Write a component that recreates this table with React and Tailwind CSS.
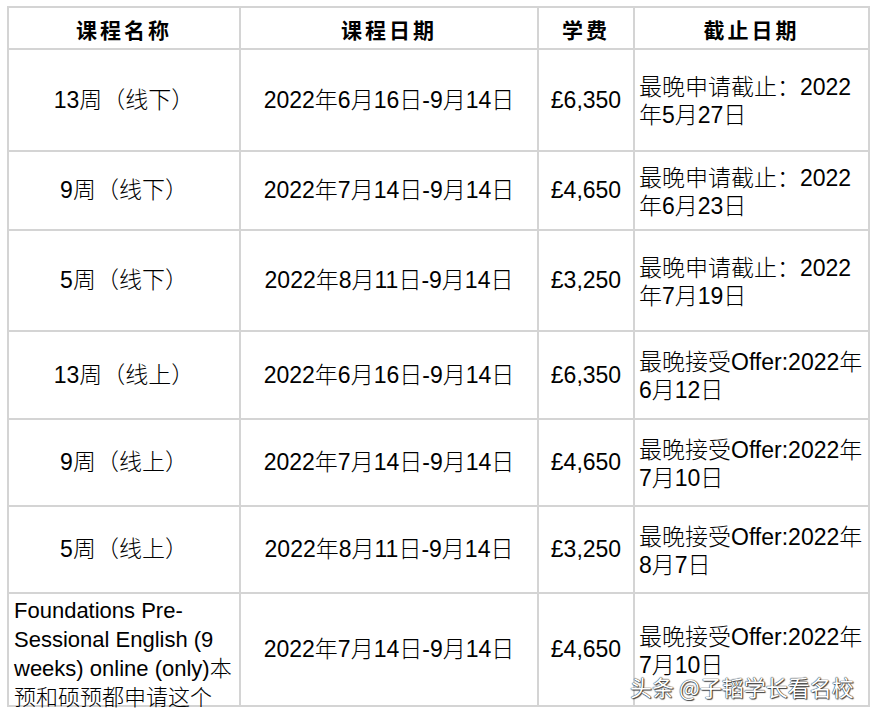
import React from "react";

const rows = [
  { name: "13周（线下）", date: "2022年6月16日-9月14日", fee: "£6,350", due: ["最晚申请截止：2022", "年5月27日"] },
  { name: "9周（线下）", date: "2022年7月14日-9月14日", fee: "£4,650", due: ["最晚申请截止：2022", "年6月23日"] },
  { name: "5周（线下）", date: "2022年8月11日-9月14日", fee: "£3,250", due: ["最晚申请截止：2022", "年7月19日"] },
  { name: "13周（线上）", date: "2022年6月16日-9月14日", fee: "£6,350", due: ["最晚接受Offer:2022年", "6月12日"] },
  { name: "9周（线上）", date: "2022年7月14日-9月14日", fee: "£4,650", due: ["最晚接受Offer:2022年", "7月10日"] },
  { name: "5周（线上）", date: "2022年8月11日-9月14日", fee: "£3,250", due: ["最晚接受Offer:2022年", "8月7日"] },
];

const body = "font-['Liberation_Sans','Noto_Sans_CJK_SC',sans-serif] text-[23px] text-black";

function App() {
  return (
    <div className="relative min-h-screen w-full bg-white pt-[6px] pl-[7px]">
      <div
        className={`grid w-fit grid-cols-[230px_296px_94px_233px] grid-rows-[40px_100px_77px_99px_86px_85px_85px_111px] gap-[2px] bg-[#d4d4d4] p-[2px] ${body}`}
      >
        {["课程名称", "课程日期", "学费", "截止日期"].map((h) => (
          <div
            key={h}
            className="flex items-center justify-center bg-white pt-[4px] font-['Noto_Sans_CJK_SC',serif] text-[21px] font-bold tracking-[3px]"
          >
            {h}
          </div>
        ))}

        {rows.map((r, i) => (
          <React.Fragment key={i}>
            <div className="flex items-center justify-center bg-white font-light">{r.name}</div>
            <div className="flex items-center justify-center bg-white whitespace-nowrap font-light">{r.date}</div>
            <div className="flex items-center justify-center bg-white">{r.fee}</div>
            <div className="flex items-center bg-white pl-[4px] pt-[2px] leading-[28px] whitespace-nowrap font-light">
              <div>
                {r.due[0]}
                <br />
                {r.due[1]}
              </div>
            </div>
          </React.Fragment>
        ))}

        <div className="bg-white pl-[5px] pt-[2px] text-[22px] leading-[29px] whitespace-nowrap font-light">
          Foundations Pre-
          <br />
          Sessional English (9
          <br />
          weeks) online (only)本
          <br />
          预和硕预都申请这个
        </div>
        <div className="flex items-center justify-center bg-white whitespace-nowrap font-light">2022年7月14日-9月14日</div>
        <div className="flex items-center justify-center bg-white">£4,650</div>
        <div className="flex items-center bg-white pl-[4px] pt-[2px] leading-[28px] whitespace-nowrap font-light">
          <div>
            最晚接受Offer:2022年
            <br />
            7月10日
          </div>
        </div>
      </div>

      <div className="absolute left-[630px] top-[670px] font-['Noto_Sans_CJK_SC',sans-serif] text-[22px] text-white [text-shadow:0_0_1px_#222,0_0_1px_#222,1px_1px_1px_#444]">
        头条 @子韬学长看名校
      </div>
    </div>
  );
}

export default App;
